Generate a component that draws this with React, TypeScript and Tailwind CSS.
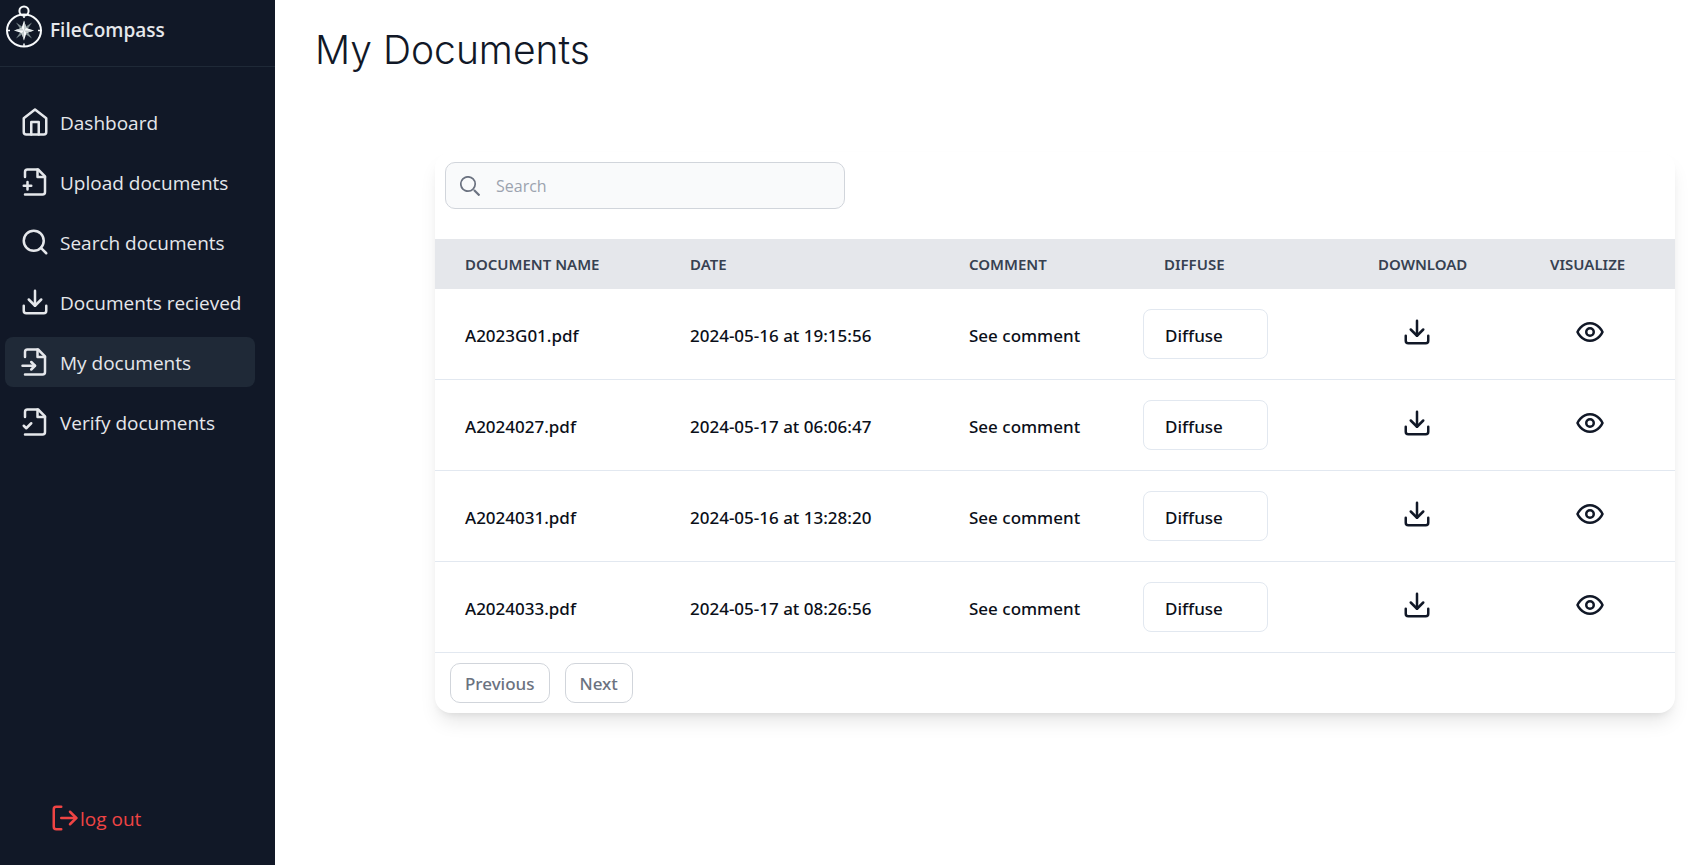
import type { ReactNode } from 'react';

function Icon({ children }: { children: ReactNode }) {
  return (
    <svg
      viewBox="0 0 24 24"
      fill="none"
      stroke="currentColor"
      strokeWidth={2}
      strokeLinecap="round"
      strokeLinejoin="round"
      aria-hidden="true"
      className="size-[30px] shrink-0"
    >
      {children}
    </svg>
  );
}

const HomeIcon = () => (
  <Icon>
    <path d="m3 9 9-7 9 7v11a2 2 0 0 1-2 2H5a2 2 0 0 1-2-2z" />
    <path d="M9 22V12h6v10" />
  </Icon>
);

const FileIcon = ({ children }: { children: ReactNode }) => (
  <Icon>
    <path d="M4 22h14a2 2 0 0 0 2-2V7.5L14.5 2H6a2 2 0 0 0-2 2v4" />
    <path d="M14 2v6h6" />
    {children}
  </Icon>
);

const SearchIcon = () => (
  <Icon>
    <circle cx="11" cy="11" r="8" />
    <path d="m21 21-4.3-4.3" />
  </Icon>
);

const DownloadIcon = () => (
  <Icon>
    <path d="M21 15v4a2 2 0 0 1-2 2H5a2 2 0 0 1-2-2v-4" />
    <path d="m7 10 5 5 5-5" />
    <path d="M12 15V3" />
  </Icon>
);

const EyeIcon = () => (
  <Icon>
    <path d="M2 12s3-7 10-7 10 7 10 7-3 7-10 7-10-7-10-7Z" />
    <circle cx="12" cy="12" r="3" />
  </Icon>
);

const LogOutIcon = () => (
  <Icon>
    <path d="M9 21H5a2 2 0 0 1-2-2V5a2 2 0 0 1 2-2h4" />
    <path d="m16 17 5-5-5-5" />
    <path d="M21 12H9" />
  </Icon>
);

function CompassLogo() {
  return (
    <svg viewBox="0 0 38 44" className="h-11 w-[38px] shrink-0" aria-hidden="true">
      <g fill="none" stroke="#f8fafc">
        <circle cx="19" cy="7" r="4.6" strokeWidth="2" />
        <ellipse cx="19" cy="26.500" rx="17" ry="16" strokeWidth="2" />
        <path d="M19 11v3M19 39.500v3M2 26.500h3M33 26.500h3" strokeWidth="1.5" />
      </g>
      <path
        d="M11 18.500l6 4h4l6-4-4 6v4l4 6-6-4h-4l-6 4 4-6v-4Z"
        fill="#7c8a8e"
      />
      <path
        d="M19 16.500l2.400 7.600 7.600 2.400-7.600 2.400L19 36.500l-2.400-7.600L9 26.500l7.600-2.400Z"
        fill="#f8fafc"
      />
      <path
        d="M19 26.500V16.500l2.400 7.600ZM19 26.500h10l-7.600 2.400ZM19 26.500v10l-2.400-7.600ZM19 26.500H9l7.600-2.400Z"
        fill="#c3cbcd"
      />
    </svg>
  );
}

const navItems = [
  { label: 'Dashboard', icon: <HomeIcon /> },
  {
    label: 'Upload documents',
    icon: (
      <FileIcon>
        <path d="M3 15h6M6 12v6" />
      </FileIcon>
    ),
  },
  { label: 'Search documents', icon: <SearchIcon /> },
  { label: 'Documents recieved', icon: <DownloadIcon /> },
  {
    label: 'My documents',
    active: true,
    icon: (
      <FileIcon>
        <path d="M2 15h10" />
        <path d="m9 18 3-3-3-3" />
      </FileIcon>
    ),
  },
  {
    label: 'Verify documents',
    icon: (
      <FileIcon>
        <path d="m3 15 2 2 4-4" />
      </FileIcon>
    ),
  },
];

const documents = [
  { name: 'A2023G01.pdf', date: '2024-05-16 at 19:15:56' },
  { name: 'A2024027.pdf', date: '2024-05-17 at 06:06:47' },
  { name: 'A2024031.pdf', date: '2024-05-16 at 13:28:20' },
  { name: 'A2024033.pdf', date: '2024-05-17 at 08:26:56' },
];

function Sidebar() {
  return (
    <aside className="flex w-[275px] shrink-0 flex-col bg-[#111827] text-[19px] leading-7 whitespace-nowrap text-[#e5e7eb]">
      <div className="flex h-[67px] items-start gap-[7px] border-b border-[#1f2937] pt-1 pl-[5px]">
        <CompassLogo />
        <span className="mt-3 font-semibold">FileCompass</span>
      </div>
      <nav className="flex flex-col gap-[10px] pt-[30px] pr-5 pl-[5px]">
        {navItems.map((item) => (
          <a
            key={item.label}
            href="#"
            aria-current={item.active ? 'page' : undefined}
            className={`flex h-[50px] items-center gap-[10px] rounded-lg px-[15px] ${item.active ? 'bg-[#1f2937]' : ''}`}
          >
            {item.icon}
            <span className="pt-0.5">{item.label}</span>
          </a>
        ))}
      </nav>
      <button type="button" className="mt-auto mb-8 ml-[50px] flex items-center self-start text-[#ef4444]">
        <LogOutIcon />
        <span className="pt-0.5">log out</span>
      </button>
    </aside>
  );
}

function DocumentsCard() {
  return (
    <section className="mt-[72px] mr-[21px] ml-[160px] rounded-2xl bg-white shadow-[0_12px_19px_-4px_rgb(0_0_0/0.1),0_5px_8px_-5px_rgb(0_0_0/0.1)]">
      <div className="px-[10px] pt-[10px] pb-[30px]">
        <div className="flex h-[47px] max-w-[400px] items-center rounded-[10px] border border-[#d1d5db] bg-[#f9fafb] pl-[14px]">
          <svg viewBox="0 0 20 20" className="size-5 shrink-0 text-[#6b7280]" fill="none" stroke="currentColor" aria-hidden="true">
            <circle cx="8" cy="8" r="7.2" strokeWidth="1.7" />
            <path d="m14 14 5.500 5.500" strokeWidth="2.200" />
          </svg>
          <input
            type="search"
            aria-label="Search"
            placeholder="Search"
            className="min-w-0 flex-1 bg-transparent px-4 text-base outline-none placeholder:text-[#9ca3af]"
          />
        </div>
      </div>
      <table className="w-full table-fixed border-separate border-spacing-0 text-left">
        <colgroup>
          <col className="w-[225px]" />
          <col className="w-[279px]" />
          <col className="w-[195px]" />
          <col className="w-[214px]" />
          <col className="w-[172px]" />
          <col className="w-[155px]" />
        </colgroup>
        <thead className="bg-[#e5e7eb] font-['Noto_Sans',sans-serif] text-[15px] leading-5 text-[#374151] uppercase">
          <tr className="h-[50px]">
            {['Document name', 'Date', 'Comment', 'Diffuse', 'Download', 'Visualize'].map((label) => (
              <th key={label} scope="col" className="pl-[30px] font-semibold">
                {label}
              </th>
            ))}
          </tr>
        </thead>
        <tbody className="font-['Noto_Sans',sans-serif] text-[17px] leading-6 font-medium [&_td]:border-b [&_td]:border-[#e2e8f0]">
          {documents.map((doc) => (
            <tr key={doc.name} className="h-[91px]">
              <td className="pt-1 pl-[30px]">{doc.name}</td>
              <td className="pt-1 pl-[30px]">{doc.date}</td>
              <td className="pt-1 pl-[30px]">
                <button type="button">See comment</button>
              </td>
              <td className="pl-[9px]">
                <button
                  type="button"
                  className="block h-[50px] w-[125px] rounded-lg border border-[#e2e8f0] pt-1 pl-[21px] text-left"
                >
                  Diffuse
                </button>
              </td>
              <td className="pb-1 pl-[54px] text-[#111827]">
                <button type="button" aria-label={`Download ${doc.name}`} className="block">
                  <DownloadIcon />
                </button>
              </td>
              <td className="pb-1 pl-[55px] text-[#111827]">
                <button type="button" aria-label={`Visualize ${doc.name}`} className="block">
                  <EyeIcon />
                </button>
              </td>
            </tr>
          ))}
        </tbody>
      </table>
      <div className="flex gap-[15px] px-[15px] py-[10px] font-['Noto_Sans',sans-serif] text-[17px] leading-6 font-medium text-[#6b7280]">
        <button type="button" className="h-10 rounded-[10px] border border-[#d1d5db] px-[14px] pt-0.5">
          Previous
        </button>
        <button type="button" className="h-10 rounded-[10px] border border-[#d1d5db] px-[14px] pt-0.5">
          Next
        </button>
      </div>
    </section>
  );
}

export default function App() {
  return (
    <div className="flex min-h-screen bg-white font-['Open_Sans','Noto_Sans',sans-serif] text-[#0b0f19]">
      <Sidebar />
      <main className="min-w-0 flex-1 pt-5">
        <h1 className="pl-10 font-['Inter',sans-serif] text-[39px] leading-[60px] font-[350] text-[#111827]">
          My Documents
        </h1>
        <DocumentsCard />
      </main>
    </div>
  );
}
